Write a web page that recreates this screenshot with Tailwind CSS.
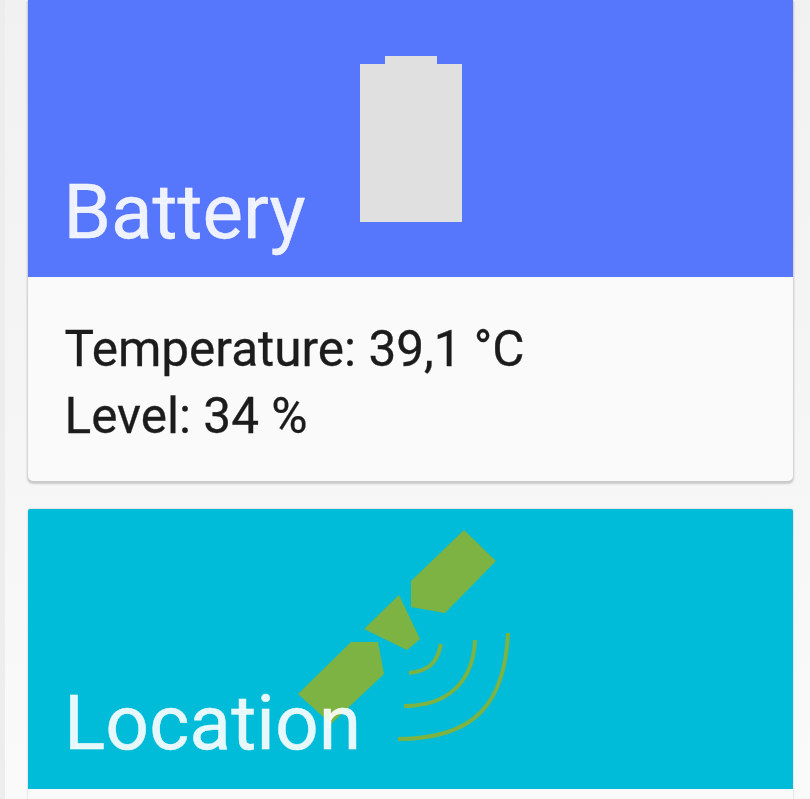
<!DOCTYPE html>
<html lang="en"><head><meta charset="utf-8"><title>Sensors</title>
<script src="https://cdn.jsdelivr.net/npm/@tailwindcss/browser@4"></script></head>
<body class="h-[799px] w-[810px] overflow-hidden bg-linear-to-b from-[#f1f1f1] via-[#f5f5f5] to-[#fafafa] font-['Roboto',sans-serif]">
<main class="flex h-full flex-col gap-[27.5px] border-l-[5px] border-[#ededed] pl-[23px] pr-[17px]">
<section class="h-[481px] shrink-0 rounded-b-[5px] bg-[#fafafa] shadow-[0_2px_2px_1px_rgba(0,0,0,0.18)]">
<header class="relative h-[277px] bg-[#5677fc]">
<svg class="absolute left-[332px] top-[56px]" width="102" height="166" viewBox="0 0 102 166" fill="#e0e0e0"><path d="M25 0H77V8H102V166H0V8H25Z"/></svg>
<h2 class="absolute left-[35.5px] top-[167px] text-[76.3px] leading-[90px] text-white/90 [-webkit-text-stroke:0.4px]">Battery</h2>
</header>
<div class="px-[36.5px] pt-[39px] text-[49.5px] leading-[66.5px] text-[#1c1c1c] [-webkit-text-stroke:0.3px]"><p>Temperature: 39,1 °C</p><p>Level: 34 %</p></div>
</section>
<section class="min-h-0 flex-1 rounded-t-[2px] bg-[#fafafa] shadow-[0_0_2px_rgba(0,0,0,0.25)]">
<header class="relative h-[280px] rounded-t-[2px] bg-[#00bcd8]">
<svg class="absolute left-[262px] top-[11.5px]" width="230" height="240" viewBox="290 520 230 240"><g fill="#7cb342"><path d="M464 530L496 561L445 613L411 607V581Z"/><path d="M399 595L420 639L407 650L364 629Z"/><path d="M351 642H378L384 674L331 724L298 694Z"/></g><g fill="none" stroke="#7cb342" stroke-width="4"><path d="M441 644C437 663 429 671 409 673"/><path d="M475 640C473 683 447 706 404 706"/><path d="M508 633C505 703 475 739 398 739"/></g></svg>
<h2 class="absolute left-[36px] top-[169.5px] text-[76.8px] leading-[90px] text-white/90 [-webkit-text-stroke:0.4px]">Location</h2>
</header></section></main></body></html>
